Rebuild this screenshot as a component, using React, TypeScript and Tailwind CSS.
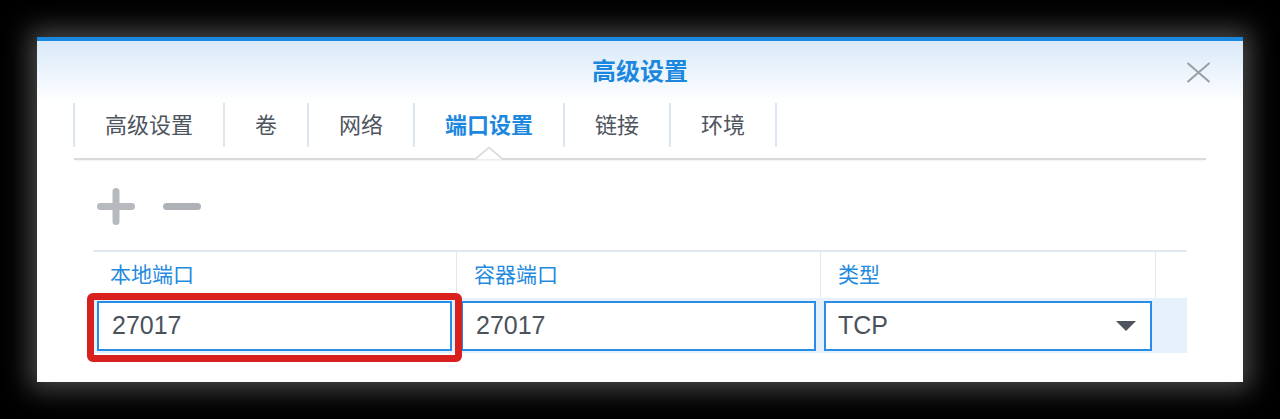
import React from 'react';

const tabs = ['高级设置', '卷', '网络', '端口设置', '链接', '环境'];
const activeTab = '端口设置';

const font = "font-['Liberation_Sans','Noto_Sans_CJK_SC',sans-serif]";

const PlusIcon = () => (
  <svg width="40" height="39" viewBox="0 0 40 39">
    <path d="M20 4.5V34.5M4.5 19.5H35.5" stroke="#b6babf" strokeWidth="7" strokeLinecap="round" />
  </svg>
);

const MinusIcon = () => (
  <svg width="40" height="39" viewBox="0 0 40 39">
    <path d="M4.5 19.5H35.5" stroke="#aeb2b7" strokeWidth="7" strokeLinecap="round" />
  </svg>
);

const App = () => {
  return (
    <div className={`h-[419px] w-[1280px] bg-black pl-[37px] pt-[37px] ${font}`}>
      <div className="flex h-[345px] w-[1206px] flex-col border-t-4 border-[#1a88e0] bg-white shadow-[0_0_24px_8px_rgba(130,130,130,0.55)]">
        {/* Title bar */}
        <div className="grid h-[62px] grid-cols-[1fr_auto_1fr] items-center bg-gradient-to-b from-[#d9e9f9] to-white">
          <div />
          <div className="text-[24px] font-bold text-[#1b87de]">高级设置</div>
          <div className="flex justify-end pr-[32px]">
            <svg width="25" height="21" viewBox="0 0 25 21">
              <path d="M1.5 1L23.5 20M23.5 1L1.5 20" stroke="#9a9da2" strokeWidth="2" />
            </svg>
          </div>
        </div>

        {/* Tabs */}
        <div className="pl-[36px] pr-[37px]">
          <div className="flex pb-[11px]">
            {tabs.map((t, i) => (
              <div
                key={t}
                className={`relative flex h-[44px] items-center border-l-2 border-[#dde5ef] px-[30px] text-[22px] ${
                  i === tabs.length - 1 ? 'border-r-2' : ''
                } ${t === activeTab ? 'font-bold text-[#1b87de]' : 'text-[#4e555e]'}`}
              >
                {t}
                {t === activeTab && (
                  <svg
                    className="absolute left-1/2 top-[44px] -translate-x-1/2"
                    width="26"
                    height="15"
                    viewBox="0 0 26 15"
                  >
                    <path d="M0 12.5L13 1L26 12.5Z" fill="white" />
                    <path d="M0 11.5L13 0.5L26 11.5" fill="none" stroke="#d6d6d6" strokeWidth="1.5" />
                  </svg>
                )}
              </div>
            ))}
          </div>
          <div className="ml-[1px] h-[2px] bg-[#dadada] shadow-[0_1px_2px_rgba(0,0,0,0.06)]" />
        </div>

        {/* Toolbar */}
        <div className="mt-[27px] flex items-center gap-[26px] pl-[59px]">
          <PlusIcon />
          <MinusIcon />
        </div>

        {/* Table */}
        <div className="ml-[56px] mt-[24px] w-[1094px]">
          <div className="flex h-[48px] border-t-2 border-[#e0e8f1] text-[21px] text-[#1f8ae0]">
            <div className="flex w-[364px] items-center border-r border-[#e1e8f0] pl-[17px]">本地端口</div>
            <div className="flex w-[364px] items-center border-r border-[#e1e8f0] pl-[17px]">容器端口</div>
            <div className="flex w-[335px] items-center border-r border-[#e1e8f0] pl-[17px]">类型</div>
            <div className="flex-1" />
          </div>
          <div className="flex h-[55px] bg-[#e6f1fb] text-[25px] text-[#4b525b]">
            <div className="relative w-[364px] pl-[4px] pr-[5px] pt-[3px]">
              <div className="flex h-[50px] items-center border-2 border-[#2a8de5] bg-white pl-[13px]">27017</div>
              <div className="absolute -bottom-[9px] -left-[6px] -right-[5px] -top-[5px] rounded-[6px] border-[7px] border-[#d8211e]" />
            </div>
            <div className="w-[364px] pl-[4px] pr-[5px] pt-[3px]">
              <div className="flex h-[50px] items-center border-2 border-[#2a8de5] bg-white pl-[13px]">27017</div>
            </div>
            <div className="w-[335px] pl-[3px] pr-[4px] pt-[3px]">
              <div className="flex h-[50px] items-center justify-between border-2 border-[#2a8de5] bg-white pl-[12px] pr-[14px]">
                <span>TCP</span>
                <svg width="20" height="10" viewBox="0 0 20 10">
                  <path d="M0 0H20L10 10Z" fill="#4d545c" />
                </svg>
              </div>
            </div>
            <div className="flex-1" />
          </div>
        </div>
      </div>
    </div>
  );
};

export default App;
